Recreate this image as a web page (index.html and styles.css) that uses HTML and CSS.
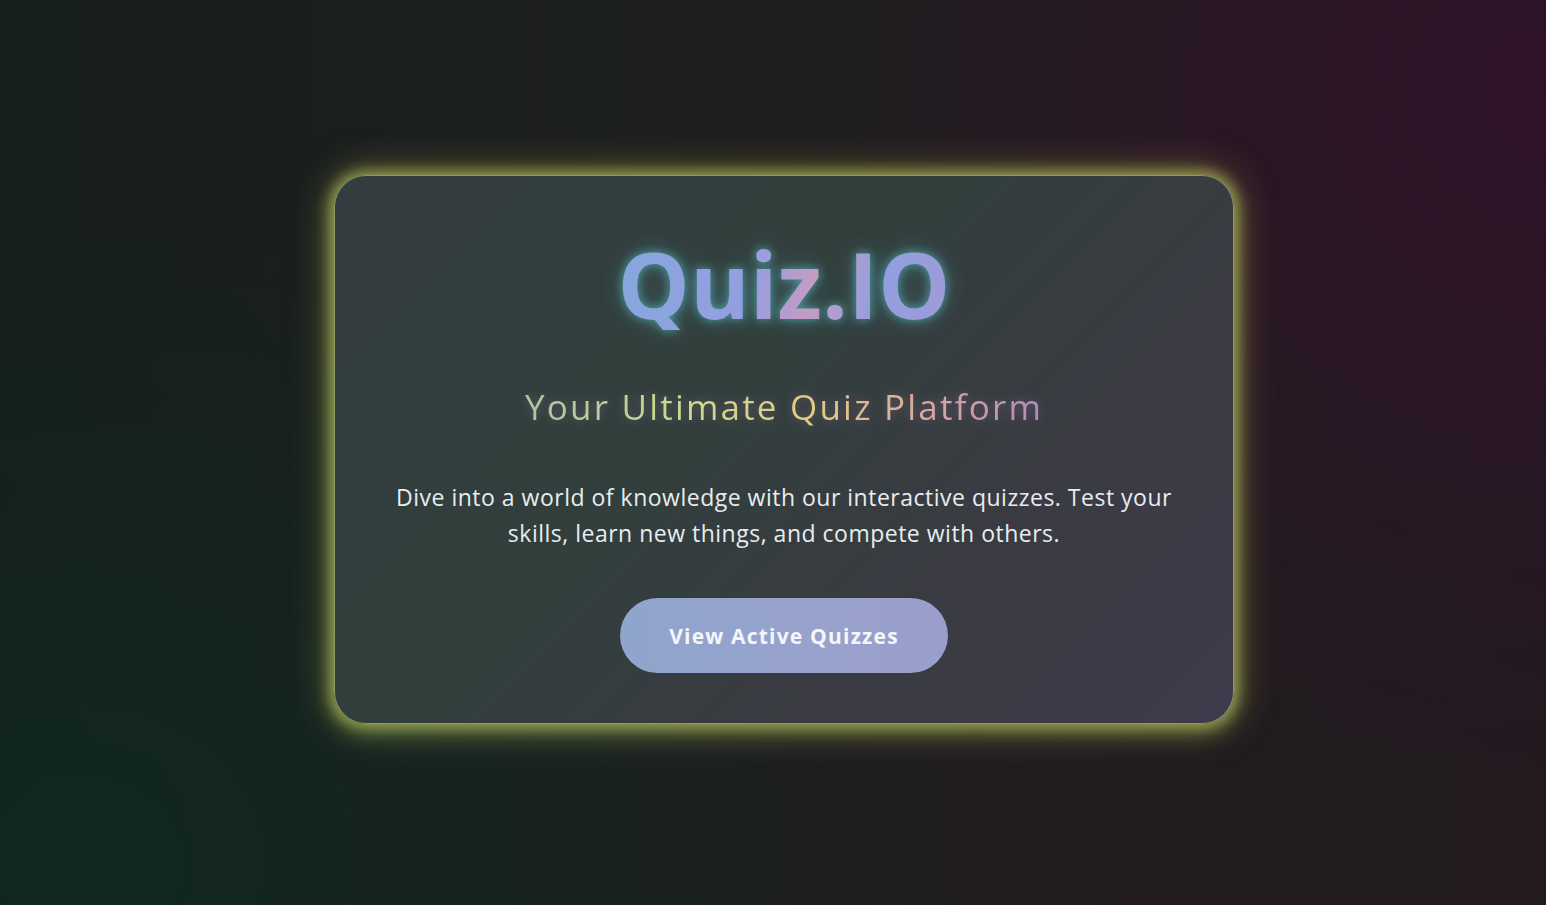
FILE: index.html
```html
<!DOCTYPE html>
<html lang="en">
<head>
<meta charset="utf-8">
<title>Quiz.IO</title>
<link rel="stylesheet" href="styles.css">
</head>
<body>
<main class="page">
  <section class="card">
    <h1 class="title">Quiz.IO</h1>
    <h2 class="subtitle">Your Ultimate Quiz Platform</h2>
    <p class="desc">Dive into a world of knowledge with our interactive quizzes. Test your skills, learn new things, and compete with others.</p>
    <a class="btn" href="#">View Active Quizzes</a>
  </section>
</main>
</body>
</html>
```
FILE: styles.css
```css
* { box-sizing: border-box; }
html, body { margin: 0; height: 100%; }
body {
  font-family: "Open Sans", "Noto Sans", sans-serif;
  background-color: #1d1e1e;
  background-image:
    radial-gradient(ellipse 45% 75% at 100% 10%, rgba(48, 18, 42, 0.95) 0%, rgba(48, 18, 42, 0) 100%),
    radial-gradient(ellipse 50% 70% at 5% 95%, rgba(16, 40, 34, 0.9) 0%, rgba(16, 40, 34, 0) 100%),
    linear-gradient(90deg, #161e1d 0%, #1d1f1f 40%, #211c1f 70%, #221a1f 100%);
  overflow: hidden;
}
.page {
  height: 905px;
  display: flex;
  align-items: center;
  justify-content: center;
  padding-left: 22px;
  padding-bottom: 6px;
}
.card {
  width: 900px;
  height: 549px;
  border-radius: 32px;
  background: linear-gradient(135deg, #343c3f 0%, #313f3c 40%, #3a3b42 70%, #3f3a4b 100%);
  border: 1px solid rgba(170, 200, 110, 0.7);
  box-shadow:
    0 0 14px 4px rgba(200, 210, 100, 0.6),
    0 0 34px 10px rgba(175, 160, 70, 0.35),
    0 8px 22px 2px rgba(130, 200, 100, 0.25);
  display: flex;
  flex-direction: column;
  align-items: center;
  padding: 63px 56px 0;
  text-align: center;
}
.title {
  margin: 0;
  font-size: 91px;
  font-weight: 700;
  line-height: 1;
  background: linear-gradient(100deg, #86a8dc 0%, #959ee0 40%, #c49cc4 58%, #929fe0 78%, #a09ad8 100%);
  -webkit-background-clip: text;
  background-clip: text;
  color: transparent;
  filter: drop-shadow(0 0 5px rgba(90, 210, 220, 0.6)) drop-shadow(0 0 10px rgba(90, 190, 210, 0.3));
}
.subtitle {
  margin: 56px 0 0;
  font-size: 35px;
  font-weight: 400;
  letter-spacing: 2.2px;
  line-height: 1.2;
  background: linear-gradient(90deg, #a8c6a4 0%, #cbd98c 30%, #e0cc84 55%, #d8a8a0 78%, #b08cbc 100%);
  -webkit-background-clip: text;
  background-clip: text;
  color: transparent;
  filter: drop-shadow(0 0 5px rgba(200, 140, 200, 0.35));
}
.desc {
  margin: 51px 0 0;
  font-size: 23px;
  letter-spacing: 0.5px;
  line-height: 36px;
  color: #e8ecef;
  max-width: 800px;
}
.btn {
  margin-top: 47px;
  display: inline-flex;
  align-items: center;
  justify-content: center;
  width: 328px;
  height: 75px;
  border-radius: 38px;
  background: linear-gradient(90deg, #8fa5cc 0%, #98a2cc 60%, #9a9ecb 100%);
  color: #f4f6fb;
  font-size: 21px;
  font-weight: 700;
  letter-spacing: 1.2px;
  text-decoration: none;
}
```
